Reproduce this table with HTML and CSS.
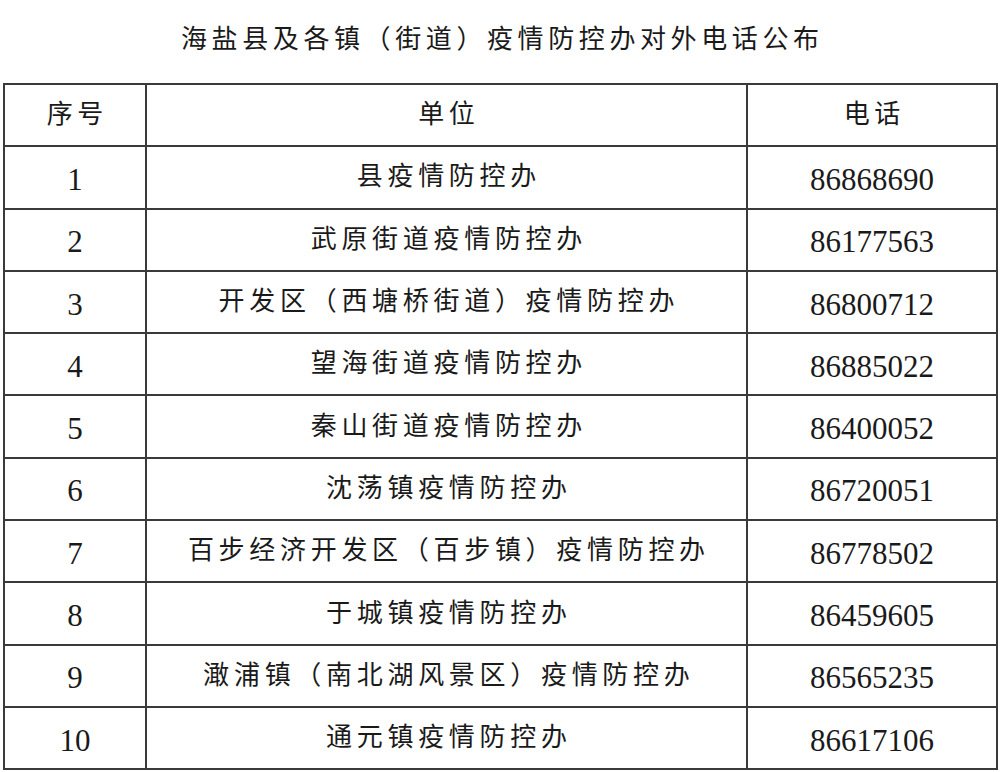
FILE: index.html
```html
<!DOCTYPE html>
<html lang="zh-CN">
<head>
<meta charset="utf-8">
<title>海盐县及各镇（街道）疫情防控办对外电话公布</title>
<link rel="stylesheet" href="styles.css">
</head>
<body>
<h1 class="title">海盐县及各镇（街道）疫情防控办对外电话公布</h1>
<table class="phones">
  <colgroup>
    <col class="c-no">
    <col class="c-unit">
    <col class="c-tel">
  </colgroup>
  <thead>
    <tr><th class="cn">序号</th><th class="cn">单位</th><th class="cn">电话</th></tr>
  </thead>
  <tbody>
    <tr><td class="num">1</td><td class="cn">县疫情防控办</td><td class="num">86868690</td></tr>
    <tr><td class="num">2</td><td class="cn">武原街道疫情防控办</td><td class="num">86177563</td></tr>
    <tr><td class="num">3</td><td class="cn">开发区（西塘桥街道）疫情防控办</td><td class="num">86800712</td></tr>
    <tr><td class="num">4</td><td class="cn">望海街道疫情防控办</td><td class="num">86885022</td></tr>
    <tr><td class="num">5</td><td class="cn">秦山街道疫情防控办</td><td class="num">86400052</td></tr>
    <tr><td class="num">6</td><td class="cn">沈荡镇疫情防控办</td><td class="num">86720051</td></tr>
    <tr><td class="num">7</td><td class="cn">百步经济开发区（百步镇）疫情防控办</td><td class="num">86778502</td></tr>
    <tr><td class="num">8</td><td class="cn">于城镇疫情防控办</td><td class="num">86459605</td></tr>
    <tr><td class="num">9</td><td class="cn">澉浦镇（南北湖风景区）疫情防控办</td><td class="num">86565235</td></tr>
    <tr><td class="num">10</td><td class="cn">通元镇疫情防控办</td><td class="num">86617106</td></tr>
  </tbody>
</table>
</body>
</html>
```
FILE: styles.css
```css
html, body {
  margin: 0;
  padding: 0;
  background: #ffffff;
}
body {
  width: 1000px;
  height: 772px;
  overflow: hidden;
  color: #1a1a1a;
  font-family: "Noto Sans CJK SC", "Noto Sans", sans-serif;
}
.title {
  margin: 0;
  height: 83px;
  box-sizing: border-box;
  padding: 19px 0 0 4.6px;
  text-align: center;
  font-size: 26px;
  font-weight: 400;
  line-height: 36px;
  letter-spacing: 4.6px;
}
.phones {
  margin-left: 3px;
  width: 993px;
  border-collapse: collapse;
  table-layout: fixed;
}
.c-no { width: 142px; }
.c-unit { width: 601px; }
.c-tel { width: 250px; }
.phones tr {
  height: 62.3px;
}
.phones th,
.phones td {
  padding: 0;
  border: 2px solid #3a3a3a;
  text-align: center;
  vertical-align: middle;
  font-weight: 400;
}
.phones .cn {
  font-family: "Noto Sans CJK SC", "Noto Sans", sans-serif;
  font-size: 26px;
  line-height: 30px;
  letter-spacing: 4.7px;
  padding: 0 0 6px 4.7px;
}
.phones .num {
  font-family: "Liberation Serif", "Times New Roman", serif;
  font-size: 31px;
  line-height: 30px;
  padding-top: 5px;
}
```
